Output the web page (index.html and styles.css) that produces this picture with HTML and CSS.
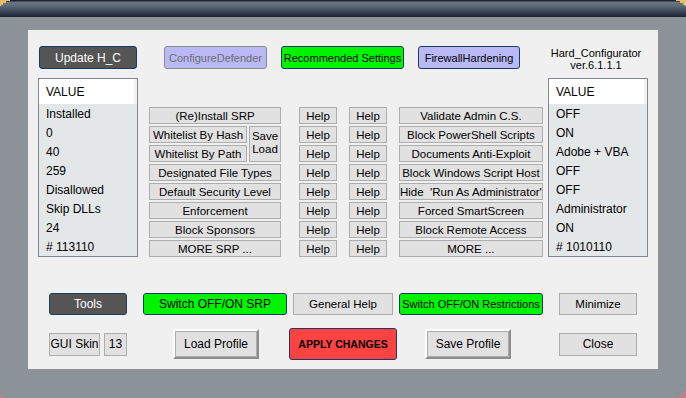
FILE: index.html
```html
<!DOCTYPE html>
<html>
<head>
    <meta charset="utf-8">
    <title>Hard_Configurator</title>
    <link rel="stylesheet" href="styles.css">
</head>
<body>
    <div class="window">
        <div class="titlebar"></div>
        <span class="corner corner-tl"></span>
        <span class="corner corner-tr"></span>
        <span class="corner corner-bl"></span>
        <span class="corner corner-br"></span>

        <div class="panel">
            <!-- верхняя строка -->
            <div class="row row-top">
                <div class="btn btn-dark w-update">Update H_C</div>
                <div class="btn btn-lav btn-disabled w-defender">ConfigureDefender</div>
                <div class="btn btn-green w-recommended">Recommended Settings</div>
                <div class="btn btn-lav w-firewall">FirewallHardening</div>
                <div class="app-title">Hard_Configurator<br>ver.6.1.1.1</div>
            </div>

            <!-- основной блок -->
            <div class="row row-main">
                <div class="listbox list-left">
                    <div class="list-head">VALUE</div>
                    <div class="list-item">Installed</div>
                    <div class="list-item">0</div>
                    <div class="list-item">40</div>
                    <div class="list-item">259</div>
                    <div class="list-item">Disallowed</div>
                    <div class="list-item">Skip DLLs</div>
                    <div class="list-item">24</div>
                    <div class="list-item"># 113110</div>
                </div>

                <div class="col col-srp">
                    <div class="btn btn-flat span2">(Re)Install SRP</div>
                    <div class="btn btn-flat">Whitelist By Hash</div>
                    <div class="btn btn-flat btn-saveload">Save<br>Load</div>
                    <div class="btn btn-flat">Whitelist By Path</div>
                    <div class="btn btn-flat span2">Designated File Types</div>
                    <div class="btn btn-flat span2">Default Security Level</div>
                    <div class="btn btn-flat span2">Enforcement</div>
                    <div class="btn btn-flat span2">Block Sponsors</div>
                    <div class="btn btn-flat span2">MORE SRP ...</div>
                </div>

                <div class="col col-help help-1">
                    <div class="btn btn-flat">Help</div>
                    <div class="btn btn-flat">Help</div>
                    <div class="btn btn-flat">Help</div>
                    <div class="btn btn-flat">Help</div>
                    <div class="btn btn-flat">Help</div>
                    <div class="btn btn-flat">Help</div>
                    <div class="btn btn-flat">Help</div>
                    <div class="btn btn-flat">Help</div>
                </div>

                <div class="col col-help help-2">
                    <div class="btn btn-flat">Help</div>
                    <div class="btn btn-flat">Help</div>
                    <div class="btn btn-flat">Help</div>
                    <div class="btn btn-flat">Help</div>
                    <div class="btn btn-flat">Help</div>
                    <div class="btn btn-flat">Help</div>
                    <div class="btn btn-flat">Help</div>
                    <div class="btn btn-flat">Help</div>
                </div>

                <div class="col col-restr">
                    <div class="btn btn-flat">Validate Admin C.S.</div>
                    <div class="btn btn-flat">Block PowerShell Scripts</div>
                    <div class="btn btn-flat">Documents Anti-Exploit</div>
                    <div class="btn btn-flat">Block Windows Script Host</div>
                    <div class="btn btn-flat">Hide &nbsp;'Run As Administrator'</div>
                    <div class="btn btn-flat">Forced SmartScreen</div>
                    <div class="btn btn-flat">Block Remote Access</div>
                    <div class="btn btn-flat">MORE ...</div>
                </div>

                <div class="listbox list-right">
                    <div class="list-head">VALUE</div>
                    <div class="list-item">OFF</div>
                    <div class="list-item">ON</div>
                    <div class="list-item">Adobe + VBA</div>
                    <div class="list-item">OFF</div>
                    <div class="list-item">OFF</div>
                    <div class="list-item">Administrator</div>
                    <div class="list-item">ON</div>
                    <div class="list-item"># 1010110</div>
                </div>
            </div>

            <!-- нижние кнопки -->
            <div class="row row-actions">
                <div class="btn btn-dark w-tools">Tools</div>
                <div class="btn btn-green w-switch-srp">Switch OFF/ON SRP</div>
                <div class="btn btn-flat w-general">General Help</div>
                <div class="btn btn-green w-switch-restr">Switch OFF/ON Restrictions</div>
                <div class="btn btn-flat w-minimize">Minimize</div>
            </div>

            <div class="row row-bottom">
                <div class="btn btn-flat w-skin">GUI Skin</div>
                <div class="btn btn-flat w-skin-num">13</div>
                <div class="btn btn-raised w-load">Load Profile</div>
                <div class="btn btn-red w-apply">APPLY CHANGES</div>
                <div class="btn btn-raised w-save">Save Profile</div>
                <div class="btn btn-flat w-close">Close</div>
            </div>
        </div>
    </div>
</body>
</html>
```

FILE: styles.css
```css
html, body { margin: 0; padding: 0; }
body { width: 686px; height: 398px; overflow: hidden; background: #8b9298;
       font-family: "Liberation Sans", Arial, sans-serif; font-size: 11px; color: #000; }

/* Окно */
.window { position: relative; width: 686px; height: 398px; }
.titlebar { height: 17px;
            background: linear-gradient(#1d2330 0, #1d2330 1px, #6c7785 2px, #5e6a78 6px, #3c4658 11px, #27303f 15px, #1c2230 17px); }
.corner { position: absolute; display: block; }
.corner-tl { left: 0; top: 0; width: 10px; height: 6px; background: #e6bf62;
             clip-path: polygon(0 0, 100% 0, 100% 17%, 60% 17%, 60% 50%, 30% 50%, 30% 83%, 12% 83%, 12% 100%, 0 100%); }
.corner-tr { right: 0; top: 0; width: 10px; height: 6px; background: #e6bf62;
             clip-path: polygon(0 0, 100% 0, 100% 100%, 88% 100%, 88% 83%, 70% 83%, 70% 50%, 40% 50%, 40% 17%, 0 17%); }
.corner-bl { left: 0; bottom: 0; width: 5px; height: 5px; background: #b9858d;
             clip-path: polygon(0 0, 100% 100%, 0 100%); }
.corner-br { right: 0; bottom: 0; width: 8px; height: 8px; background: #b9858d;
             clip-path: polygon(100% 0, 100% 100%, 0 100%); }

/* Панель */
.panel { margin: 13px 28px 0; width: 630px; height: 339px; background: #f0f0f0; }
.row { display: flex; align-items: flex-start; }

/* Кнопки */
.btn { box-sizing: border-box; display: flex; align-items: center; justify-content: center;
       text-align: center; white-space: nowrap; line-height: 12px; }
.btn-flat { background: #e1e1e1; border: 1px solid #adadad; }
.btn-dark { background: #555555; border: 1px solid #1b3a66; border-radius: 3px; color: #fff; }
.btn-lav { background: #b9b9f6; border: 1px solid #1b3a66; border-radius: 3px; }
.btn-disabled { border-color: #8a8a8a; color: #6e6e6e; }
.btn-green { background: #00f400; border: 1px solid #1b3a66; border-radius: 3px; }
.btn-red { background: #ff4242; border: 1px solid #1b3a66; border-radius: 3px; font-weight: bold; font-size: 10.5px; }
.btn-raised { background: #e1e1e1; border: 2px solid; border-color: #ffffff #8c8c8c #8c8c8c #ffffff;
              box-shadow: inset 0 0 0 1px #adadad, inset 0 0 0 2px #e1e1e1; font-size: 12px; }

/* Верхняя строка */
.row-top { padding-top: 16px; height: 23px; }
.row-top .btn { height: 23px; }
.w-update { margin-left: 11px; width: 98px; font-size: 12px; }
.w-defender { margin-left: 27px; width: 103px; }
.w-recommended { margin-left: 14px; width: 123px; }
.w-firewall { margin-left: 14px; width: 102px; }
.app-title { margin: 1px 0 0 21px; width: 110px; text-align: center; line-height: 12px; }

/* Основной блок */
.row-main { margin-top: 9px; }
.listbox { box-sizing: border-box; width: 100px; height: 179px; background: #e4e7e7; border: 1px solid #828790;
           font-size: 12px; }
.list-left { margin-left: 10px; }
.list-right { margin-left: 9px; }
.list-head { height: 25px; line-height: 26px; padding-left: 7px; background: #fff;
             box-shadow: inset -3px 0 0 #f2f2f2; }
.list-item { height: 19px; line-height: 20px; padding-left: 7px; }

.col { display: grid; grid-auto-rows: 17px; row-gap: 2px; margin-top: 29px; }
.col-srp { margin-left: 11px; width: 132px; grid-template-columns: 98px 32px; column-gap: 2px; }
.span2 { grid-column: span 2; }
.btn-saveload { grid-row: span 2; font-size: 12px; line-height: 13px; padding-bottom: 3px; }
.col-help { width: 38px; }
.help-1 { margin-left: 18px; }
.help-2 { margin-left: 12px; }
.col-restr { margin-left: 12px; width: 140px; }
.col .btn { font-size: 11.5px; }

/* Нижние кнопки */
.row-actions { margin-top: 36px; }
.row-actions .btn { height: 22px; }
.w-tools { margin-left: 21px; width: 78px; font-size: 12px; }
.w-switch-srp { margin-left: 16px; width: 144px; font-size: 12px; }
.w-general { margin-left: 6px; width: 100px; font-size: 11.5px; }
.w-switch-restr { margin-left: 6px; width: 144px; font-size: 11px; }
.w-minimize { margin-left: 16px; width: 78px; font-size: 11.5px; }

.row-bottom { margin-top: 13px; align-items: center; height: 32px; }
.row-bottom .btn-flat { height: 23px; font-size: 12px; }
.w-skin { margin-left: 21px; width: 51px; }
.w-skin-num { margin-left: 4px; width: 23px; }
.w-load { margin-left: 46px; width: 86px; height: 30px; }
.w-apply { margin-left: 30px; width: 108px; height: 32px; }
.w-save { margin-left: 28px; width: 86px; height: 30px; }
.w-close { margin-left: 48px; width: 78px; }
```
